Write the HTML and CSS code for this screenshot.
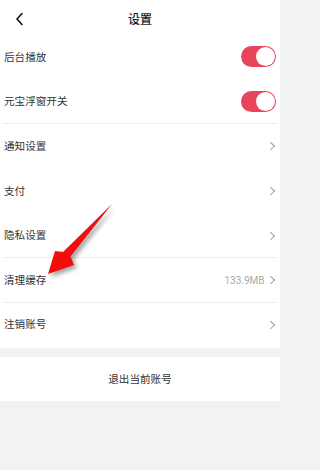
FILE: index.html
```html
<!DOCTYPE html>
<html lang="zh-CN">
<head>
<meta charset="utf-8">
<title>设置</title>
<link rel="stylesheet" href="styles.css">
</head>
<body>
<div class="page">
  <header class="topbar">
    <svg class="back" width="10" height="14" viewBox="0 0 10 14"><path d="M7 1.5 L2 7 L7 12.5" fill="none" stroke="#111" stroke-width="1.6" stroke-linecap="round" stroke-linejoin="round"/></svg>
    <h1 class="title">设置</h1>
  </header>
  <section class="list">
    <div class="row"><span class="label">后台播放</span><span class="toggle"><span class="knob"></span></span></div>
    <div class="row sep"><span class="label">元宝浮窗开关</span><span class="toggle"><span class="knob"></span></span></div>
    <div class="row"><span class="label">通知设置</span><span class="chev"></span></div>
    <div class="row"><span class="label">支付</span><span class="chev"></span></div>
    <div class="row sep"><span class="label">隐私设置</span><span class="chev"></span></div>
    <div class="row sep"><span class="label">清理缓存</span><span class="right"><span class="value">133.9MB</span><span class="chev"></span></span></div>
    <div class="row"><span class="label">注销账号</span><span class="chev"></span></div>
  </section>
  <div class="gap"></div>
  <div class="logout">退出当前账号</div>
  <svg class="arrow" width="280" height="470" viewBox="0 0 280 470">
    <polygon points="112,204 70.5,256.5 74,265 48,274 55,251 63,252" fill="#f40d0d"/>
  </svg>
</div>
</body>
</html>
```
FILE: styles.css
```css
* { box-sizing: border-box; margin: 0; padding: 0; }
html, body { width: 280px; height: 470px; }
body {
  background: #f1f2f2;
  font-family: "Noto Sans CJK SC", "Noto Sans", sans-serif;
  color: #333;
  overflow: hidden;
}
.page { position: relative; width: 280px; height: 470px; }
.topbar {
  height: 35px;
  background: #fff;
  display: flex;
  align-items: center;
  justify-content: center;
  position: relative;
}
.back { position: absolute; left: 15px; top: 12px; }
.title { font-size: 12px; font-weight: 500; color: #1a1a1a; line-height: 1; margin-top: 2px; }
.list { background: #fff; }
.row {
  height: 44.67px;
  display: flex;
  align-items: center;
  justify-content: space-between;
  border-bottom: 1px solid transparent;
  margin: 0 3px;
  padding-left: 1px;
  padding-right: 3px;
}
.row.sep { border-bottom-color: #eeeeee; }
.label { font-size: 10.6px; color: #333; line-height: 1; }
.toggle {
  width: 35px;
  height: 21px;
  border-radius: 11px;
  background: #e8455c;
  position: relative;
  margin-right: -2px;
}
.knob {
  position: absolute;
  right: 1px;
  top: 1px;
  width: 19px;
  height: 19px;
  border-radius: 50%;
  background: #fff;
}
.right { display: flex; align-items: center; }
.value { font-size: 10px; color: #aaa; font-family: "Roboto", "Noto Sans", sans-serif; margin-right: 3px; }
.chev {
  width: 5.5px;
  height: 5.5px;
  border-top: 1px solid #999;
  border-right: 1px solid #999;
  transform: rotate(45deg);
  margin-right: 1px;
}
.gap { height: 9px; }
.logout {
  height: 44px;
  background: #fff;
  display: flex;
  align-items: center;
  justify-content: center;
  font-size: 10.6px;
  color: #333;
}
.arrow {
  position: absolute;
  left: 0;
  top: 0;
  pointer-events: none;
  filter: drop-shadow(3px 3px 2px rgba(0,0,0,0.35));
}
```
